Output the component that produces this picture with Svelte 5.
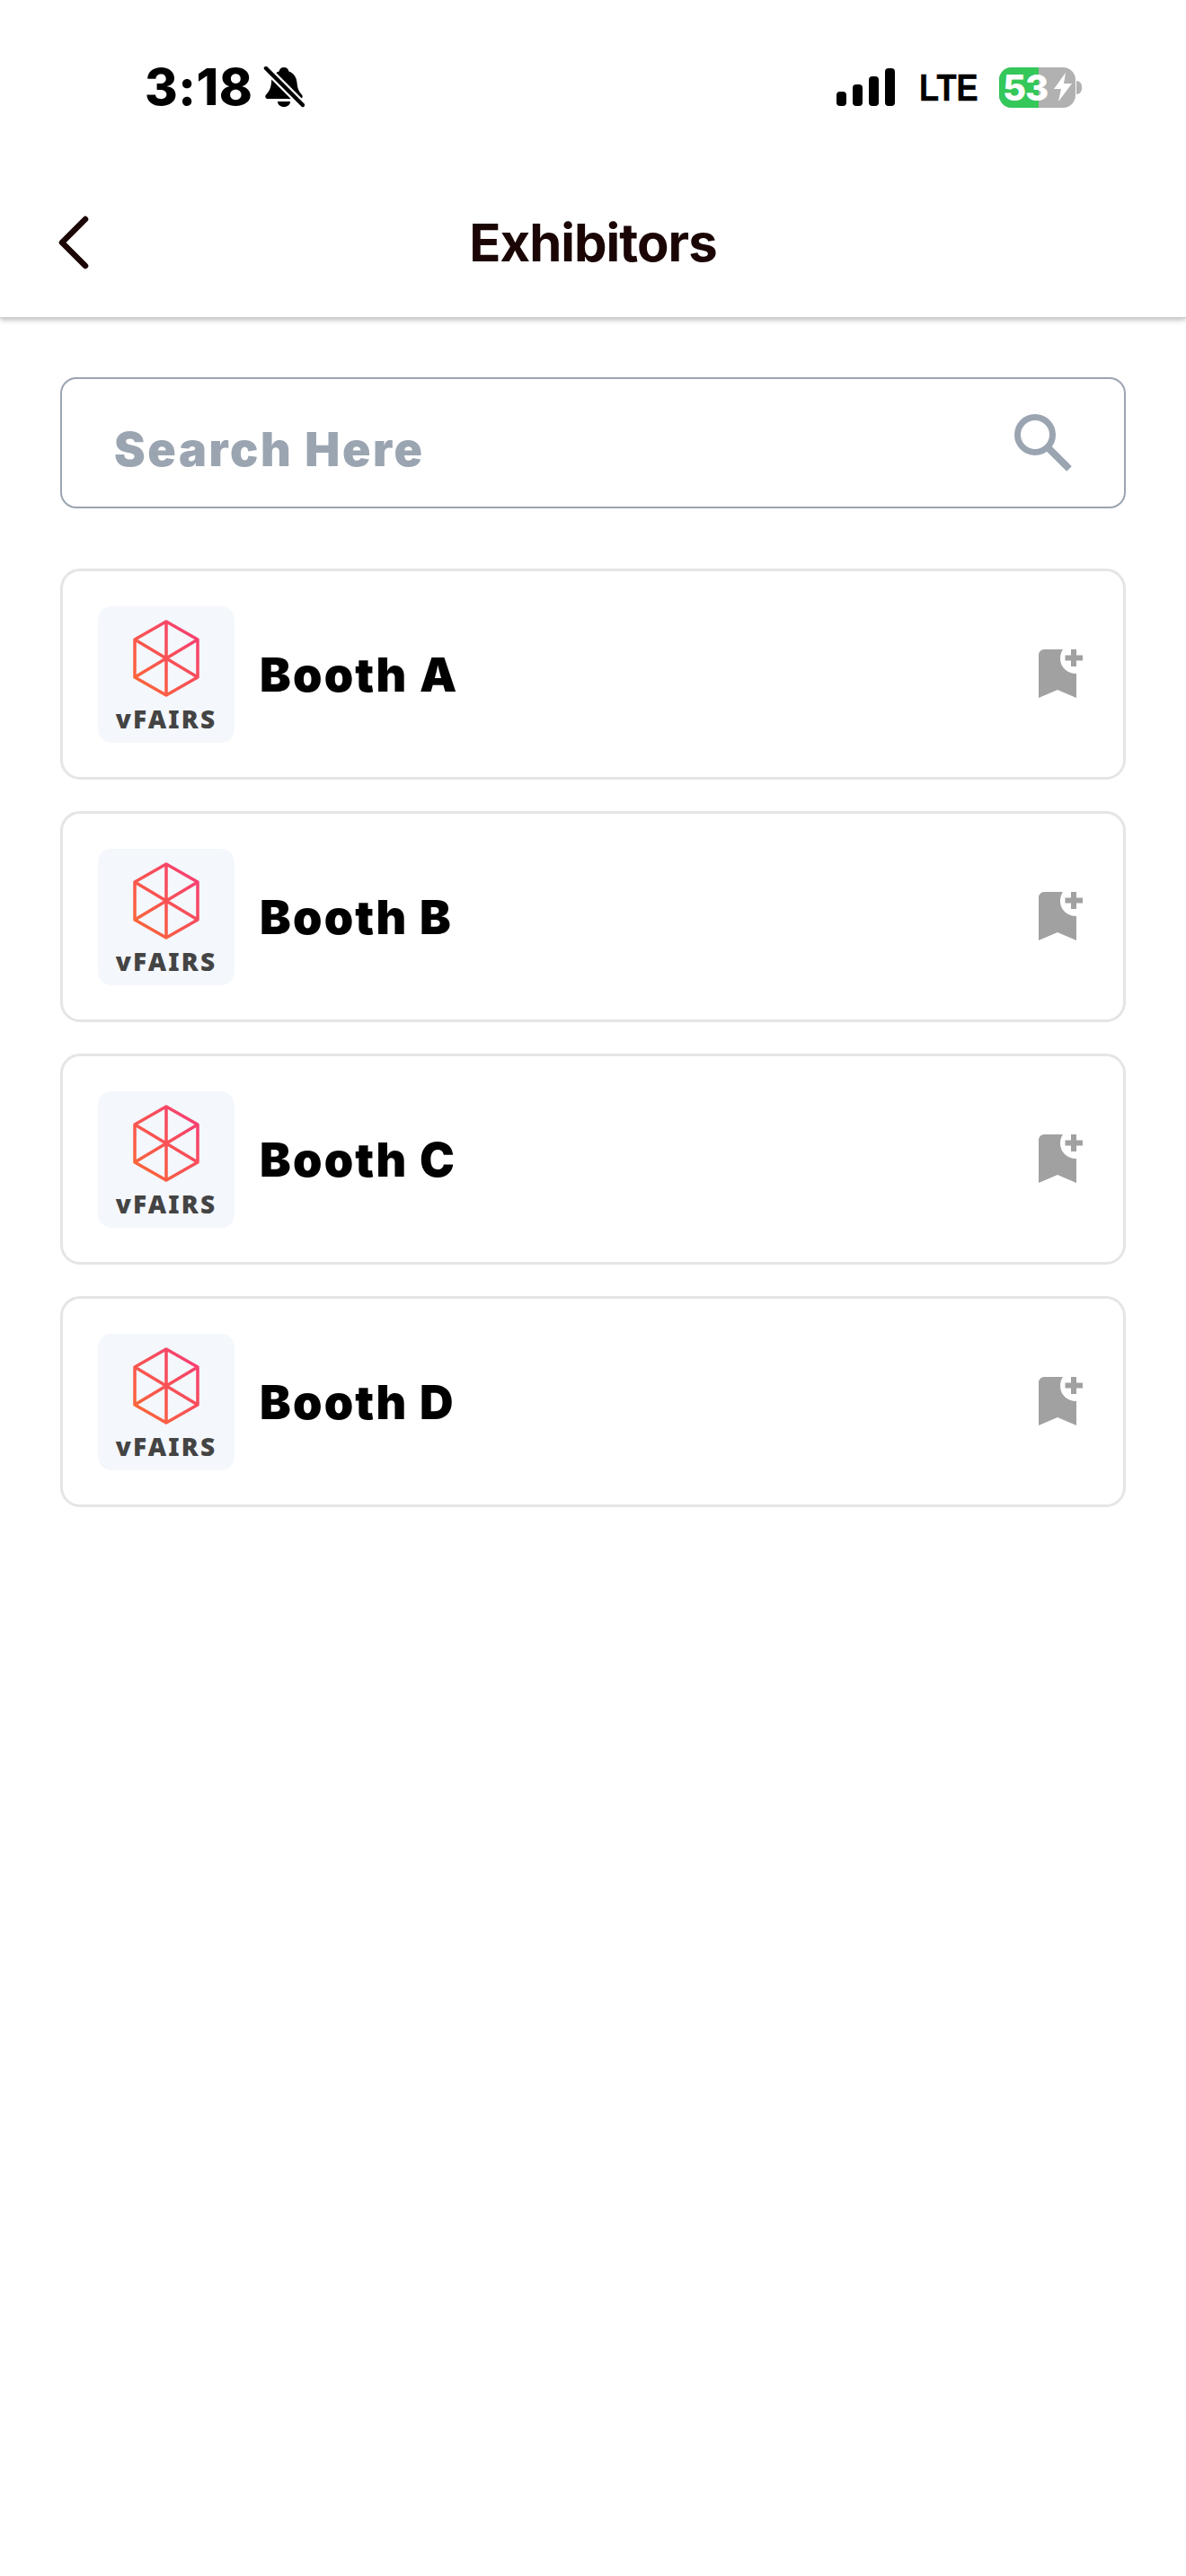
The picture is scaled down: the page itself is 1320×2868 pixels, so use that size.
<script>
	const booths = ['Booth A', 'Booth B', 'Booth C', 'Booth D'];
</script>

<div class="page">
	<header class="top">
		<div class="status">
			<div class="status-left">
				<span class="time">3:18</span>
				<svg class="bell" viewBox="0 0 46 46" width="46" height="46" aria-hidden="true">
					<path d="M23 1c3 0 5 2 5.500 4.500C34 7.500 37 12 37.500 18c.4 6 2 10 5.500 13.500 1.500 2 .5 4.500-2 4.500H5c-2.500 0-3.500-2.500-2-4.500C6.500 28 8.500 24 9 18c.3-6 3-10.500 8.500-12.500C18 3 20 1 23 1z" fill="#000" />
					<path d="M16 39h14c0 3.500-3 6-7 6s-7-2.500-7-6z" fill="#000" />
					<path d="M2 1l43 43" stroke="#fff" stroke-width="9" fill="none" />
					<path d="M3 2l41 41" stroke="#000" stroke-width="4.500" stroke-linecap="round" fill="none" />
				</svg>
			</div>
			<div class="status-right">
				<svg class="signal" viewBox="0 0 66 42" width="66" height="42" aria-hidden="true">
					<rect x="0" y="26" width="11" height="16" rx="4" />
					<rect x="18" y="18" width="11" height="24" rx="4" />
					<rect x="36" y="9" width="11" height="33" rx="4" />
					<rect x="54" y="0" width="11" height="42" rx="4" />
				</svg>
				<span class="lte">LTE</span>
				<div class="battery">
					<div class="cell">
						<div class="fill"></div>
						<span class="pct">53</span>
						<svg class="bolt" viewBox="0 0 20 32" width="20" height="32" aria-hidden="true">
							<path d="M13 0L0 18h8L5 32 20 12h-9z" fill="#fff" />
						</svg>
					</div>
					<div class="nub"></div>
				</div>
			</div>
		</div>
		<div class="nav">
			<svg class="back" viewBox="0 0 36 60" width="36" height="60" aria-hidden="true">
				<path d="M32 4L6 30 32 56" fill="none" stroke="#1b0505" stroke-width="6.500" stroke-linecap="round" stroke-linejoin="round" />
			</svg>
			<h1>Exhibitors</h1>
		</div>
	</header>

	<main class="content">
		<div class="search">
			<span class="placeholder">Search Here</span>
			<svg class="search-icon" viewBox="0 0 64 64" width="64" height="64" aria-hidden="true">
				<circle cx="23" cy="23" r="19.500" fill="none" stroke="#9ba5b1" stroke-width="7" />
				<path d="M37 37l24 24" stroke="#9ba5b1" stroke-width="8" fill="none" />
			</svg>
		</div>

		<ul class="list">
			{#each booths as booth}
				<li class="card">
					<div class="logo">
						<svg viewBox="0 0 74 86" width="74" height="86" aria-hidden="true">
							<defs>
								<linearGradient id="hex-{booth.slice(-1)}" x1="0" y1="1" x2="1" y2="0">
									<stop offset="0" stop-color="#fb6a32" />
									<stop offset="1" stop-color="#f63a78" />
								</linearGradient>
							</defs>
							<path
								d="M37 2L72 22V64L37 84L2 64V22ZM37 2V84M2 22L72 64M72 22L2 64"
								fill="none"
								stroke="url(#hex-{booth.slice(-1)})"
								stroke-width="3.500"
								stroke-linejoin="round"
							/>
						</svg>
						<span class="brand">vFAIRS</span>
					</div>
					<span class="name">{booth}</span>
					<svg class="bookmark" viewBox="0 0 50 56" width="50" height="56" aria-hidden="true">
						<path d="M6 0H27C25 3 24 6 24 10C24 20 32 27 42 27V54L21 45L0 54V6C0 3 3 0 6 0Z" fill="#a1a1a1" />
						<path d="M39 0V19M29.500 9.500H49" stroke="#a1a1a1" stroke-width="6" fill="none" />
					</svg>
				</li>
			{/each}
		</ul>
	</main>
</div>

<style>
	:global(body) {
		margin: 0;
		background: #fff;
	}

	.page {
		min-height: 2868px;
		background: #fff;
		font-family: Inter, 'Liberation Sans', sans-serif;
	}

	.top {
		height: 354px;
		box-sizing: border-box;
		border-bottom: 1px solid #cfcfcf;
		box-shadow: 0 2px 6px rgba(0, 0, 0, 0.28);
	}

	.status {
		display: flex;
		justify-content: space-between;
		align-items: center;
		height: 74px;
		padding: 60px 116px 0 161px;
	}

	.status-left {
		display: flex;
		align-items: center;
		gap: 12px;
	}

	.time {
		font-size: 56px;
		line-height: 60px;
		font-weight: 800;
		letter-spacing: 0.5px;
		color: #000;
	}

	.status-right {
		display: flex;
		align-items: center;
		gap: 26px;
	}

	.signal {
		fill: #000;
	}

	.lte {
		display: inline-block;
		width: 63px;
		font-family: 'Liberation Sans', sans-serif;
		font-size: 43px;
		font-weight: 700;
		color: #000;
		transform: scaleX(0.84);
		transform-origin: left center;
		-webkit-text-stroke: 0.5px #000;
	}

	.battery {
		display: flex;
		align-items: center;
		gap: 1px;
	}

	.cell {
		position: relative;
		display: flex;
		align-items: center;
		width: 85px;
		height: 45px;
		border-radius: 14px;
		background: #b1b1b1;
	}

	.fill {
		position: absolute;
		inset: 0 41px 0 0;
		border-radius: 14px 0 0 14px;
		background: #34c759;
	}

	.pct {
		position: relative;
		flex: none;
		width: 58px;
		margin-left: 4px;
		font-size: 40px;
		line-height: 45px;
		font-weight: 800;
		letter-spacing: -1px;
		color: #fff;
	}

	.bolt {
		position: relative;
		flex: none;
		margin-left: -1px;
	}

	.nub {
		width: 6px;
		height: 15px;
		border-radius: 0 6px 6px 0;
		background: #b1b1b1;
	}

	.nav {
		position: relative;
		display: flex;
		align-items: center;
		justify-content: center;
		height: 110px;
		margin-top: 81px;
	}

	.back {
		position: absolute;
		left: 63px;
		top: 25px;
	}

	h1 {
		margin: 0;
		font-family: Inter, sans-serif;
		font-size: 58px;
		font-weight: 700;
		letter-spacing: -1px;
		color: #1b0505;
	}

	.content {
		padding: 66px 67px 0;
	}

	.search {
		display: flex;
		align-items: center;
		justify-content: space-between;
		height: 146px;
		box-sizing: border-box;
		padding: 0 58px 0 58px;
		border: 2px solid #9ba5b1;
		border-radius: 18px;
	}

	.placeholder {
		margin-top: 14px;
		font-size: 52px;
		font-weight: 900;
		letter-spacing: 2.6px;
		color: #9ba5b1;
	}

	.list {
		display: flex;
		flex-direction: column;
		gap: 35px;
		margin: 67px 0 0;
		padding: 0;
		list-style: none;
	}

	.card {
		display: flex;
		align-items: center;
		height: 235px;
		box-sizing: border-box;
		padding: 0 44px 0 39px;
		border: 3px solid #e5e5e5;
		border-radius: 22px;
	}

	.logo {
		display: flex;
		flex-direction: column;
		align-items: center;
		justify-content: space-between;
		width: 152px;
		height: 152px;
		box-sizing: border-box;
		padding: 15px 0 14px;
		border-radius: 15px;
		background: #f4f7fc;
	}

	.brand {
		font-family: 'Noto Sans', sans-serif;
		font-size: 28px;
		line-height: 26px;
		font-weight: 900;
		letter-spacing: 2.2px;
		color: #444;
	}

	.name {
		flex: 1;
		margin-left: 28px;
		padding-top: 2px;
		font-family: Inter, sans-serif;
		font-size: 52px;
		font-weight: 900;
		letter-spacing: 2.2px;
		color: #000;
	}
</style>
